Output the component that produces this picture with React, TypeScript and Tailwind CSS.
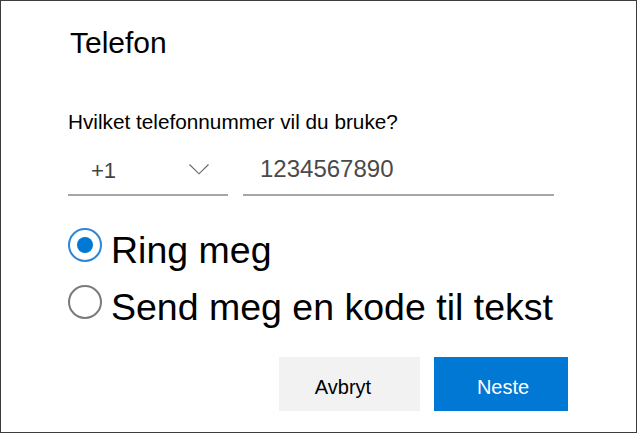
import React from "react";

export default function App() {
  return (
    <div className="w-[637px] h-[433px] border border-[#3c3c3c] bg-white" style={{ fontFamily: '"Liberation Sans", Arial, sans-serif' }}>
      <div className="flex flex-col pl-[67px] pt-[27px]">
        <h1 className="ml-[2px] text-[30px] leading-[30px] text-black font-normal">Telefon</h1>
        <div className="mt-[53px] text-[20.75px] leading-[21px] text-black">Hvilket telefonnummer vil du bruke?</div>
        <div className="mt-[25px] flex gap-[15px]">
          <div className="w-[160px] h-[39px] border-b-2 border-[#a6a6a6] flex items-start justify-between pl-[23px] pr-[19px]">
            <span className="text-[22px] leading-[24px] mt-[2px] text-[#444]">+1</span>
            <svg width="20" height="11" viewBox="0 0 20 11" className="mt-[7px]">
              <path d="M0.5 0.5 L10 9.8 L19.5 0.5" fill="none" stroke="#666" strokeWidth="1.1" />
            </svg>
          </div>
          <div className="w-[311px] h-[39px] border-b-2 border-[#a6a6a6] pl-[17px]">
            <span className="text-[24px] leading-[24px] text-[#4a4a4a]">1234567890</span>
          </div>
        </div>
        <div className="mt-[32px] flex flex-col">
          <div className="flex items-start h-[57px]">
            <div className="w-[34px] h-[34px] rounded-full border-2 border-[#2b88d8] flex items-center justify-center">
              <div className="w-[16px] h-[16px] rounded-full bg-[#0078d4]" />
            </div>
            <span className="ml-[9px] mt-[3.5px] text-[37.5px] leading-[37.5px] text-black">Ring meg</span>
          </div>
          <div className="flex items-start h-[57px]">
            <div className="w-[34px] h-[34px] rounded-full border-2 border-[#7a7a7a]" />
            <span className="ml-[9px] mt-[3.5px] text-[37.5px] leading-[37.5px] text-black">Send meg en kode til tekst</span>
          </div>
        </div>
        <div className="mt-[15px] flex gap-[14px] justify-end pr-[68px]">
          <button className="w-[141px] h-[54px] bg-[#f2f2f2] text-[20px] text-black pt-[5px] pr-[13px]">Avbryt</button>
          <button className="w-[134px] h-[54px] bg-[#0078d4] text-[20px] text-white pt-[5px] pl-[4px]">Neste</button>
        </div>
      </div>
    </div>
  );
}
